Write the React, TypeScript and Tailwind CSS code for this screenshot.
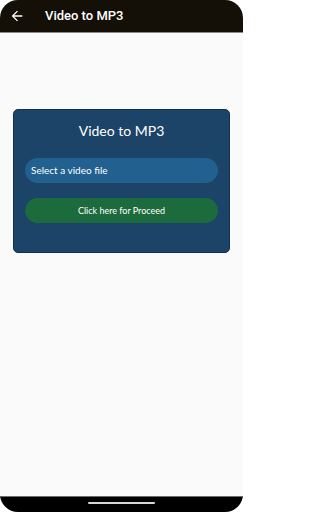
import React from 'react';

const App: React.FC = () => {
  return (
    <div className="w-[243px] h-[512px] bg-white overflow-hidden">
      <div className="flex flex-col h-full bg-[#fafafa] rounded-[18px] overflow-hidden">
        {/* app bar */}
        <div className="h-[33px] shrink-0 bg-[#140f07] flex items-center border-b border-[#8a8a8a]">
          <svg className="ml-[9px] w-[16px] h-[16px] text-white" viewBox="0 0 24 24" fill="currentColor">
            <path d="M20 11H7.83l5.59-5.59L12 4l-8 8 8 8 1.41-1.41L7.83 13H20v-2z" />
          </svg>
          <span
            className="ml-[20px] text-white text-[13px] font-medium"
            style={{ fontFamily: 'Roboto, "Noto Sans", sans-serif' }}
          >
            Video to MP3
          </span>
        </div>

        {/* content */}
        <div className="flex-1 px-[13px] pt-[76px]" style={{ fontFamily: 'Lato, "Noto Sans", sans-serif' }}>
          <div className="w-[217px] h-[144px] bg-[#1c4468] border border-[#10304f] rounded-[5px] px-[11px] pt-[12px] flex flex-col">
            <h1 className="text-center text-white text-[14px] leading-[18px]">Video to MP3</h1>
            <div className="mt-[18px] h-[25px] rounded-full bg-[#22608f] flex items-center px-[6px]">
              <span className="text-white text-[10px]">Select a video file</span>
            </div>
            <button className="mt-[15px] h-[25px] rounded-full bg-[#1c6b3d] text-white text-[9px] flex items-center justify-center">
              Click here for Proceed
            </button>
          </div>
        </div>

        {/* nav bar */}
        <div className="h-[16px] shrink-0 bg-black border-t border-[#6b6b6b] flex justify-center pt-[5px]">
          <div className="w-[67px] h-[2px] rounded-full bg-[#d6d6d6]" />
        </div>
      </div>
    </div>
  );
};

export default App;
